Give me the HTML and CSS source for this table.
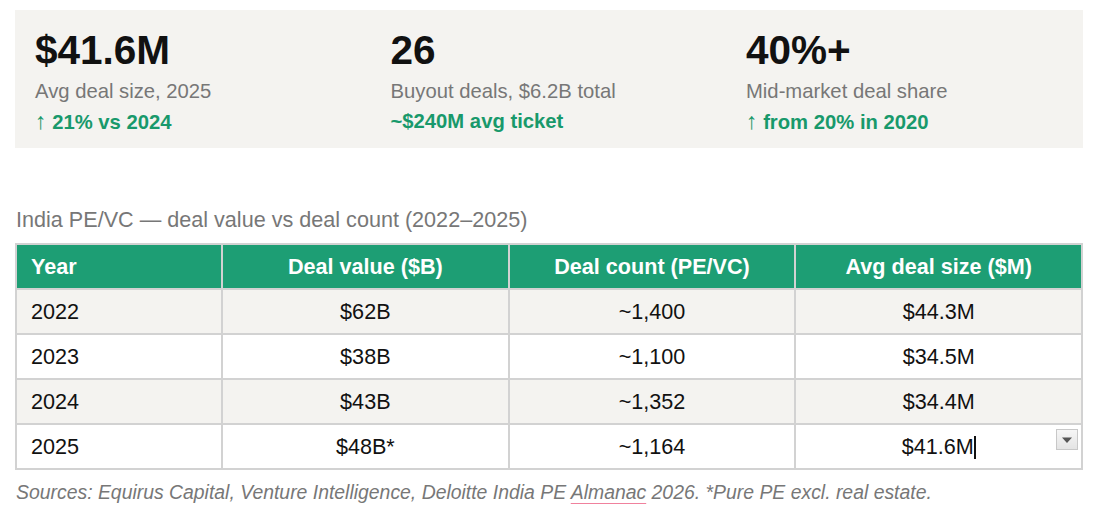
FILE: index.html
```html
<!DOCTYPE html>
<html>
<head>
<meta charset="utf-8">
<link rel="stylesheet" href="styles.css">
</head>
<body>
<div class="page">
  <section class="stats">
    <div class="stat">
      <div class="stat-num">$41.6M</div>
      <div class="stat-label">Avg deal size, 2025</div>
      <div class="stat-note"><span class="arrow">↑</span> 21% vs 2024</div>
    </div>
    <div class="stat">
      <div class="stat-num">26</div>
      <div class="stat-label">Buyout deals, $6.2B total</div>
      <div class="stat-note">~$240M avg ticket</div>
    </div>
    <div class="stat">
      <div class="stat-num">40%+</div>
      <div class="stat-label">Mid-market deal share</div>
      <div class="stat-note"><span class="arrow">↑</span> from 20% in 2020</div>
    </div>
  </section>

  <div class="table-title">India PE/VC — deal value vs deal count (2022–2025)</div>
  <table class="data">
    <thead>
      <tr>
        <th class="c-year">Year</th>
        <th>Deal value ($B)</th>
        <th>Deal count (PE/VC)</th>
        <th>Avg deal size ($M)</th>
      </tr>
    </thead>
    <tbody>
      <tr class="alt"><td class="c-year">2022</td><td>$62B</td><td>~1,400</td><td>$44.3M</td></tr>
      <tr><td class="c-year">2023</td><td>$38B</td><td>~1,100</td><td>$34.5M</td></tr>
      <tr class="alt"><td class="c-year">2024</td><td>$43B</td><td>~1,352</td><td>$34.4M</td></tr>
      <tr><td class="c-year">2025</td><td>$48B*</td><td>~1,164</td><td class="active">$41.6M<span class="caret"></span><span class="dropdown"><svg width="12" height="8" viewBox="0 0 12 8"><path d="M1 1.5h10L6 7z" fill="#555"/></svg></span></td></tr>
    </tbody>
  </table>
  <p class="source">Sources: Equirus Capital, Venture Intelligence, Deloitte India PE <span class="spell">Almanac</span> 2026. *Pure PE excl. real estate.</p>
</div>
</body>
</html>
```

FILE: styles.css
```css
* { box-sizing: border-box; }
html, body { margin: 0; padding: 0; background: #fff; }
body {
  font-family: "Liberation Sans", Arial, Helvetica, sans-serif;
  color: #111;
}
.page {
  padding: 10px 17px 0 15px;
}
.stats {
  background: #f4f3f0;
  display: grid;
  grid-template-columns: 317px 317px 1fr;
  column-gap: 38.5px;
  padding: 16px 20px 12px 20px;
  height: 138px;
}
.stat-num {
  font-size: 40.5px;
  font-weight: 700;
  line-height: 48px;
  color: #111;
  margin-bottom: 2px;
}
.stat-label {
  font-size: 20.25px;
  line-height: 30px;
  color: #777;
}
.stat-note {
  font-size: 20.25px;
  line-height: 30px;
  font-weight: 700;
  color: #18996b;
}
.stat-note .arrow {
  font-weight: 400;
  font-size: 23px;
}
.table-title {
  margin-top: 60px;
  font-size: 21.6px;
  line-height: 24px;
  color: #777;
  padding-left: 1px;
}
.data {
  margin-top: 11px;
  width: 100%;
  border-collapse: collapse;
  font-size: 21.6px;
  table-layout: fixed;
}
.data th, .data td {
  border: 2px solid #d2d2d2;
  height: 45px;
  text-align: center;
  padding: 0 14px;
  vertical-align: middle;
}
.data th {
  background: #1d9e74;
  color: #fff;
  font-weight: 700;
  height: 45px;
}
.data .c-year {
  text-align: left;
  width: 206px;
}
.data tr.alt td { background: #f4f3f0; }
.data td.active { position: relative; }
.caret {
  display: inline-block;
  width: 2px;
  height: 23px;
  background: #111;
  vertical-align: -5px;
}
.dropdown {
  position: absolute;
  right: 3px;
  top: 4px;
  width: 22px;
  height: 21px;
  border: 1px solid #c8c8c8;
  background: linear-gradient(#f6f6f6, #e4e4e4);
  display: flex;
  align-items: center;
  justify-content: center;
}
.source {
  margin: 10px 0 0 1px;
  font-size: 19.4px;
  font-style: italic;
  color: #777;
  line-height: 24px;
}
.spell {
  text-decoration-line: underline;
  text-decoration-style: solid;
  text-decoration-color: #f0819d;
  text-decoration-thickness: 3px;
  text-underline-offset: 4px;
  text-decoration-skip-ink: none;
}
```
